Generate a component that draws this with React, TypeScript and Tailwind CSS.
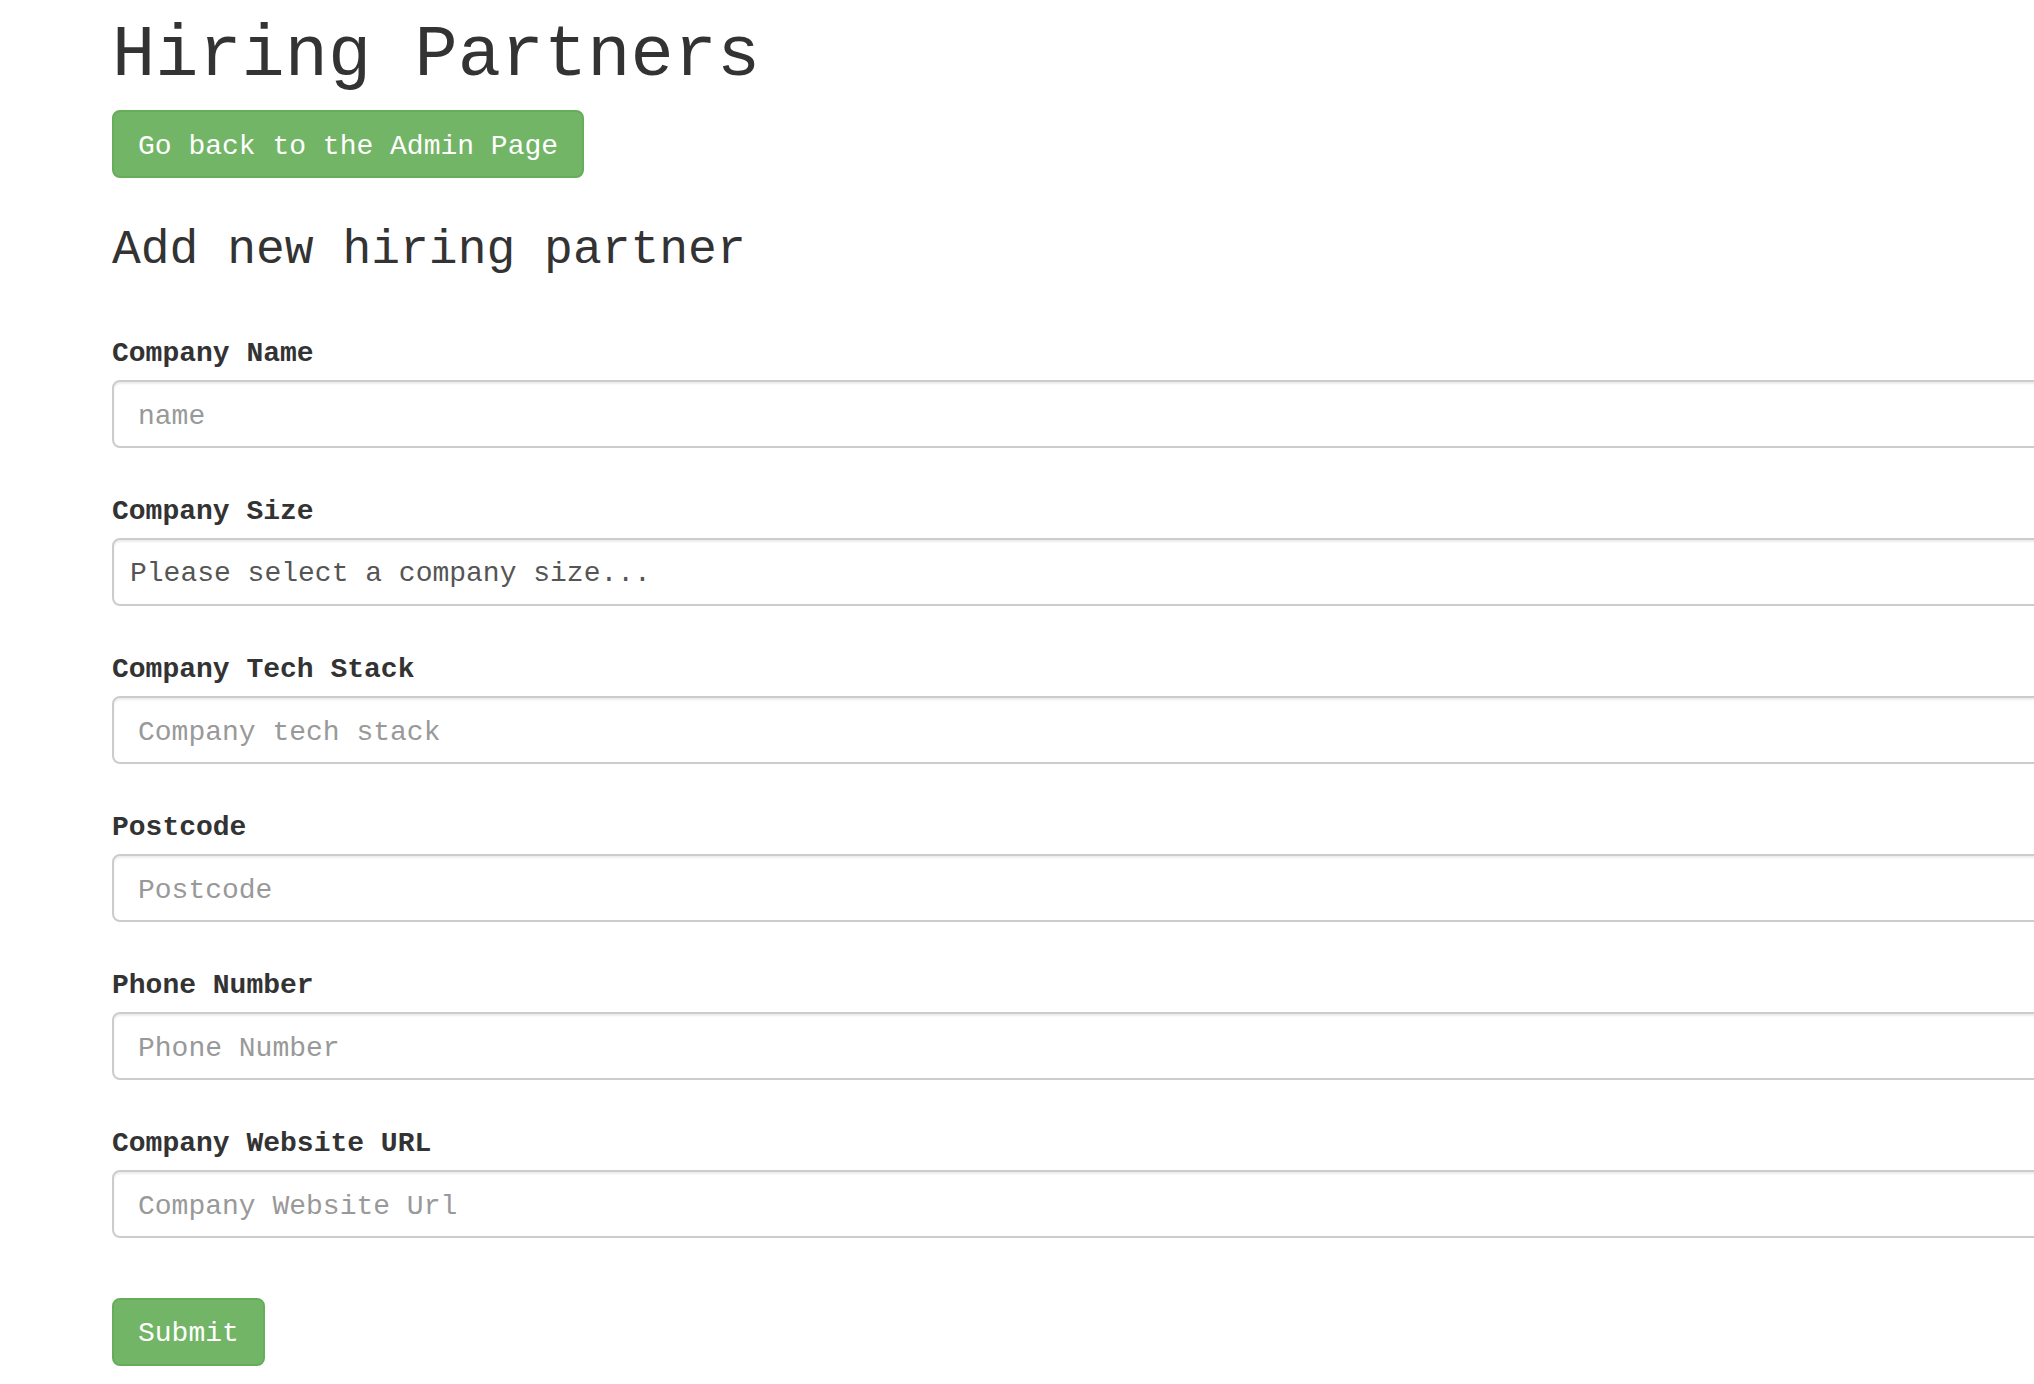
import React from "react";

const mono = { fontFamily: '"Liberation Mono", "Courier New", monospace' };

function Field({ label, children }: { label: string; children: React.ReactNode }) {
  return (
    <div className="mb-[41px]">
      <label className="block pt-[3px] text-[28px] leading-[40px] font-bold text-[#333] mb-[6px]">{label}</label>
      {children}
    </div>
  );
}

function TextInput({ placeholder }: { placeholder: string }) {
  return (
    <input
      type="text"
      placeholder={placeholder}
      className="block w-[2000px] h-[68px] px-[24px] pt-[5px] pb-0 text-[28px] leading-[40px] text-[#555] bg-white border-2 border-[#ccc] rounded-[8px] shadow-[inset_0_2px_2px_rgba(0,0,0,0.075)] placeholder:text-[#999] outline-none"
      style={mono}
    />
  );
}

export default function App() {
  return (
    <div className="w-full h-[1384px] overflow-hidden bg-white text-[#333]" style={mono}>
      <div className="pl-[112px] pt-[17px]">
        <h1 className="text-[72px] leading-[1.1] font-normal text-[#333] m-0">Hiring Partners</h1>
        <button
          type="button"
          className="mt-[14px] h-[68px] px-[24px] pt-[5px] text-[28px] leading-[40px] text-white bg-[#72b566] border-2 border-[#66ad5a] rounded-[8px]"
          style={mono}
        >
          Go back to the Admin Page
        </button>
        <h3 className="mt-[46px] text-[48px] leading-[1.1] font-normal text-[#333]">Add new hiring partner</h3>
        <form className="mt-[54px]" onSubmit={(e) => e.preventDefault()}>
          <Field label="Company Name">
            <TextInput placeholder="name" />
          </Field>
          <Field label="Company Size">
            <select
              defaultValue=""
              className="block w-[2000px] h-[68px] pl-[16px] pr-[24px] pt-[5px] pb-0 text-[28px] leading-[40px] text-[#555] bg-white border-2 border-[#ccc] rounded-[8px] shadow-[inset_0_2px_2px_rgba(0,0,0,0.075)] appearance-none outline-none"
              style={mono}
            >
              <option value="">Please select a company size...</option>
              <option value="small">1-10</option>
              <option value="medium">11-50</option>
              <option value="large">51+</option>
            </select>
          </Field>
          <Field label="Company Tech Stack">
            <TextInput placeholder="Company tech stack" />
          </Field>
          <Field label="Postcode">
            <TextInput placeholder="Postcode" />
          </Field>
          <Field label="Phone Number">
            <TextInput placeholder="Phone Number" />
          </Field>
          <Field label="Company Website URL">
            <TextInput placeholder="Company Website Url" />
          </Field>
          <button
            type="submit"
            className="mt-[19px] h-[68px] px-[24px] pt-[5px] text-[28px] leading-[40px] text-white bg-[#72b566] border-2 border-[#66ad5a] rounded-[8px]"
            style={mono}
          >
            Submit
          </button>
        </form>
      </div>
    </div>
  );
}
